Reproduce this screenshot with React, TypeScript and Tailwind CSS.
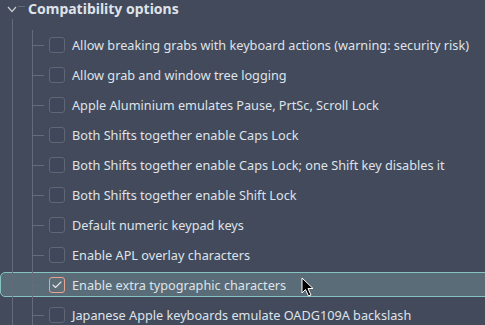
import { Check } from 'lucide-react'

const items = [
  'Allow breaking grabs with keyboard actions (warning: security risk)',
  'Allow grab and window tree logging',
  'Apple Aluminium emulates Pause, PrtSc, Scroll Lock',
  'Both Shifts together enable Caps Lock',
  'Both Shifts together enable Caps Lock; one Shift key disables it',
  'Both Shifts together enable Shift Lock',
  'Default numeric keypad keys',
  'Enable APL overlay characters',
  'Enable extra typographic characters',
  'Japanese Apple keyboards emulate OADG109A backslash',
]

const line = 'border-[#646b7b]'

function Row({ label, checked }: { label: string; checked?: boolean }) {
  return (
    <div className="relative flex h-[30px] items-stretch">
      {checked && (
        <div className="absolute left-0 -right-3 top-[2px] bottom-[3px] rounded-[5px] border border-[#86c2c0] bg-[#5a6c78]" />
      )}
      <div className={`relative ml-[12px] w-[20px] border-l ${line}`} />
      <div className={`relative flex w-[17px] items-center border-l ${line}`}>
        <div className="h-px w-[11px] bg-[#646b7b]" />
      </div>
      <div className="relative flex items-center">
        {checked ? (
          <div className="flex h-[16px] w-[16px] items-center justify-center rounded-[3px] border border-[#e8a392] bg-[#5d6e79]">
            <Check size={12} strokeWidth={2.2} className="text-[#e4e7ec]" />
          </div>
        ) : (
          <div className="h-[16px] w-[16px] rounded-[3px] border border-[#5f6676] bg-[#40475a]" />
        )}
        <span className="ml-[7px] mt-[2px] whitespace-nowrap text-[12.7px] text-[#dfe3e9]">{label}</span>
        {checked && (
          <svg className="ml-[15px] mt-[4px]" width="14" height="20" viewBox="0 0 14 20">
            <path d="M1 1 L1 16 L4.5 12.5 L7.5 19 L10 18 L7 11.5 L12 11.5 Z" fill="#000" stroke="#fff" strokeWidth="1" strokeLinejoin="round" />
          </svg>
        )}
      </div>
    </div>
  )
}

export default function App() {
  return (
    <div
      className="h-[325px] w-[485px] overflow-hidden bg-[#434a5c] text-[#dfe3e9]"
      style={{ fontFamily: '"Noto Sans", sans-serif' }}
    >
      <div className="flex h-[19px] items-start">
        <svg className="ml-[7px] mt-[6px]" width="18" height="8" viewBox="0 0 18 8">
          <path d="M1 1 L5 5.5 L9 1" fill="none" stroke="#c8ccd4" strokeWidth="1.2" />
          <path d="M11 0.5 H18" stroke="#646b7b" strokeWidth="1" />
        </svg>
        <span className="ml-[3px] -mt-[1px] text-[14px] font-bold leading-[20px]">Compatibility options</span>
      </div>
      <div className={`ml-[12px] h-[11px] border-l ${line}`} />
      <div>
        {items.map((it, i) => (
          <Row key={i} label={it} checked={i === 8} />
        ))}
      </div>
    </div>
  )
}
